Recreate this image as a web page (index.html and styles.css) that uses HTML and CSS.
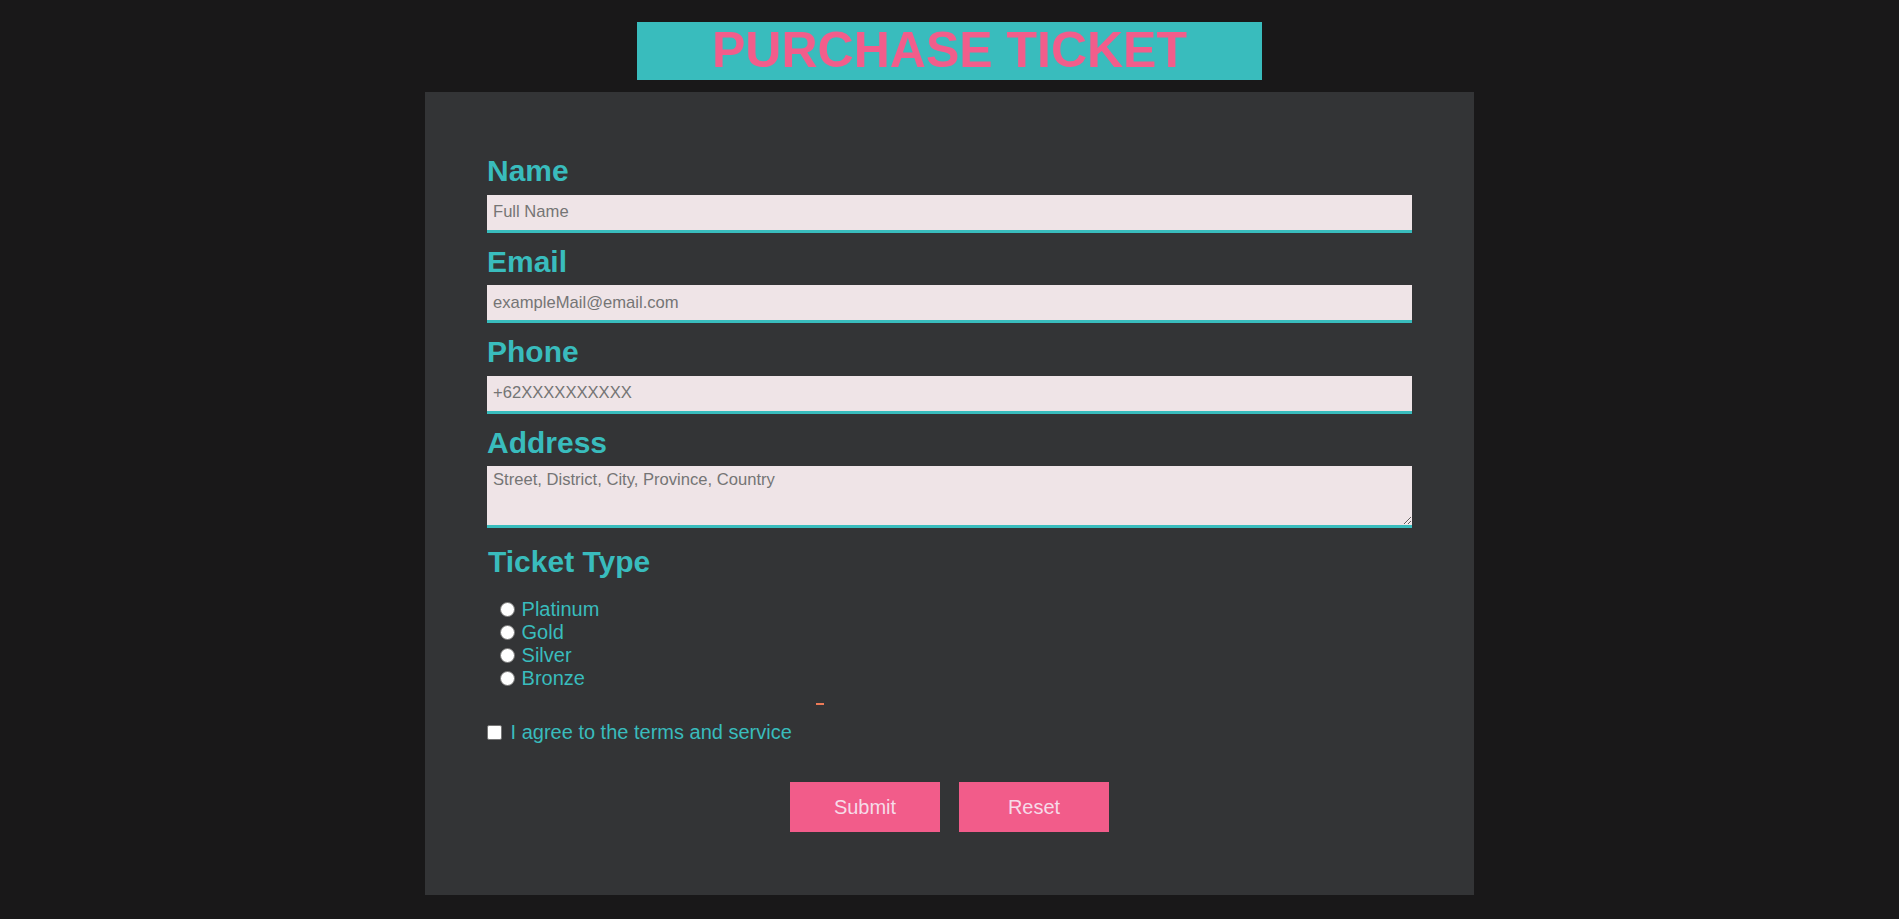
FILE: index.html
```html
<!DOCTYPE html>
<html lang="en">
<head>
<meta charset="utf-8">
<title>Purchase Ticket</title>
<link rel="stylesheet" href="styles.css">
</head>
<body>
<header class="title-box">
  <h1 class="title">PURCHASE TICKET</h1>
</header>
<main class="panel">
  <form class="form">
    <div class="field">
      <label class="label" for="name">Name</label>
      <input class="input" id="name" type="text" placeholder="Full Name">
    </div>
    <div class="field">
      <label class="label" for="email">Email</label>
      <input class="input" id="email" type="email" placeholder="exampleMail@email.com">
    </div>
    <div class="field">
      <label class="label" for="phone">Phone</label>
      <input class="input" id="phone" type="tel" placeholder="+62XXXXXXXXXX">
    </div>
    <div class="field">
      <label class="label" for="address">Address</label>
      <textarea class="input area" id="address" placeholder="Street, District, City, Province, Country"></textarea>
    </div>
    <div class="ticket">
      <div class="label ticket-label">Ticket Type</div>
      <div class="options">
        <label class="option"><input class="radio" type="radio" name="type"> Platinum</label>
        <label class="option"><input class="radio" type="radio" name="type"> Gold</label>
        <label class="option"><input class="radio" type="radio" name="type"> Silver</label>
        <label class="option"><input class="radio" type="radio" name="type"> Bronze</label>
      </div>
    </div>
    <div class="mark"></div>
    <label class="agree"><input class="check" type="checkbox"> I agree to the terms and service</label>
    <div class="buttons">
      <button class="btn" type="submit">Submit</button>
      <button class="btn" type="reset">Reset</button>
    </div>
  </form>
</main>
</body>
</html>
```
FILE: styles.css
```css
html, body {
  margin: 0;
  padding: 0;
}
body {
  background: #191819;
  font-family: "Liberation Sans", Arial, sans-serif;
  height: 919px;
  overflow: hidden;
}
.title-box {
  width: 625px;
  height: 58px;
  margin: 22px auto 0;
  background: #39bcbd;
  display: flex;
  align-items: center;
  justify-content: center;
}
.title {
  margin: 0 0 2px 0;
  font-family: "Liberation Sans", Arial, sans-serif;
  font-weight: bold;
  font-size: 50px;
  line-height: 1;
  color: #f25d8b;
}
.panel {
  width: 925px;
  margin: 12px auto 0;
  padding: 62px 62px 63px;
  background: #333436;
}
.form {
  display: flex;
  flex-direction: column;
}
.field {
  display: flex;
  flex-direction: column;
  margin-bottom: 12px;
}
.label {
  display: block;
  font-weight: bold;
  font-size: 30px;
  line-height: 34.5px;
  color: #39bcbd;
  margin-bottom: 6px;
}
.input {
  display: block;
  box-sizing: border-box;
  width: 100%;
  height: 38px;
  margin: 0;
  padding: 0 6px;
  border: none;
  border-bottom: 3px solid #39bcbd;
  background: #efe4e7;
  font-family: "Liberation Sans", Arial, sans-serif;
  font-size: 16.6px;
  color: #333;
  outline: none;
}
.input::placeholder {
  color: #757575;
}
.area {
  height: 62px;
  padding: 4px 6px;
  resize: vertical;
}
.field:nth-child(4) {
  margin-bottom: 17px;
}
.ticket-label {
  margin: 0 0 18.5px 1px;
}
.options {
  display: flex;
  flex-direction: column;
  padding-left: 9px;
}
.option, .agree {
  font-size: 20px;
  line-height: 23px;
  color: #39bcbd;
}
.radio {
  appearance: none;
  -webkit-appearance: none;
  box-sizing: border-box;
  width: 15px;
  height: 15px;
  margin: 3px 1px 0 4px;
  border: 1px solid #767676;
  border-radius: 50%;
  background: #ffffff;
  vertical-align: -1px;
}
.radio:checked {
  background: radial-gradient(circle, #0075ff 0 3px, #ffffff 3.5px);
  border-color: #0075ff;
}
.mark {
  width: 8px;
  height: 2px;
  background: #ee7a57;
  margin: 13px 0 0 329px;
}
.agree {
  margin-top: 16px;
}
.check {
  appearance: none;
  -webkit-appearance: none;
  box-sizing: border-box;
  width: 15px;
  height: 15px;
  margin: 3px 3px 0 0;
  border: 1px solid #767676;
  border-radius: 2px;
  background: #ffffff;
  vertical-align: -1px;
}
.check:checked {
  background: #0075ff;
  border-color: #0075ff;
}
.buttons {
  display: flex;
  justify-content: center;
  gap: 19px;
  margin-top: 38px;
}
.btn {
  width: 150px;
  height: 50px;
  border: none;
  background: #f25c8a;
  color: #f6dbe8;
  font-family: "Liberation Sans", Arial, sans-serif;
  font-size: 20px;
  cursor: pointer;
}
```
